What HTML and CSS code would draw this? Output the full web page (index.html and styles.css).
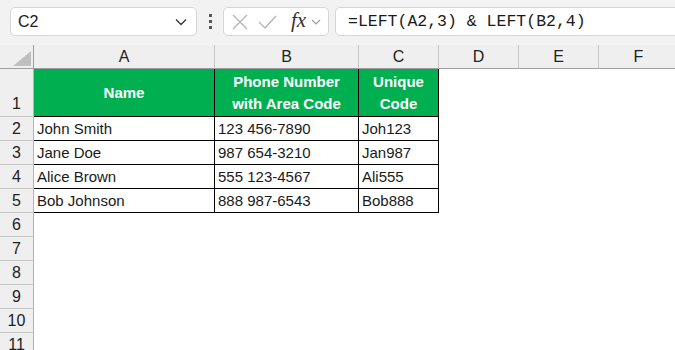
FILE: index.html
```html
<!DOCTYPE html>
<html lang="en">
<head>
  <meta charset="UTF-8">
  <meta name="viewport" content="width=device-width, initial-scale=1.0">
  <title>LEFT formula - Unique Code</title>
  <link rel="stylesheet" href="styles.css">
</head>
<body>
  <div class="toolbar">
    <div class="namebox">
      <span>C2</span>
      <svg class="chev" width="12" height="8" viewBox="0 0 12 8"><path d="M1 1.5 L6 6.5 L11 1.5" fill="none" stroke="#333" stroke-width="1.3"/></svg>
    </div>
    <div class="grip"><i></i><i></i><i></i></div>
    <div class="fxbox">
      <svg width="16" height="16" viewBox="0 0 16 16"><path d="M1 1 L15 15 M15 1 L1 15" stroke="#b3b3b3" stroke-width="1.3"/></svg>
      <svg class="check" width="19" height="14" viewBox="0 0 19 14"><path d="M1 7 L7 13 L18 1" fill="none" stroke="#b3b3b3" stroke-width="1.3"/></svg>
      <span class="fx">fx</span>
      <svg width="10" height="6" viewBox="0 0 10 6"><path d="M1 1 L5 5 L9 1" fill="none" stroke="#9a9a9a" stroke-width="1.1"/></svg>
    </div>
    <div class="formula">=LEFT(A2,3) &amp; LEFT(B2,4)</div>
  </div>

  <div class="sheet">
    <div class="corner">
      <svg width="18" height="15" viewBox="0 0 18 15"><path d="M18 0 L18 15 L0 15 Z" fill="#bfbfbf"/></svg>
    </div>
    <div class="colhead">A</div>
    <div class="colhead">B</div>
    <div class="colhead">C</div>
    <div class="colhead">D</div>
    <div class="colhead">E</div>
    <div class="colhead">F</div>

    <div class="rowhead tall">1</div>
    <div class="cell head">Name</div>
    <div class="cell head">Phone Number<br>with Area Code</div>
    <div class="cell head">Unique<br>Code</div>
    <div class="blank"></div>

    <div class="rowhead">2</div>
    <div class="cell">John Smith</div>
    <div class="cell">123 456-7890</div>
    <div class="cell">Joh123</div>
    <div class="blank"></div>

    <div class="rowhead">3</div>
    <div class="cell">Jane Doe</div>
    <div class="cell">987 654-3210</div>
    <div class="cell">Jan987</div>
    <div class="blank"></div>

    <div class="rowhead">4</div>
    <div class="cell">Alice Brown</div>
    <div class="cell">555 123-4567</div>
    <div class="cell">Ali555</div>
    <div class="blank"></div>

    <div class="rowhead">5</div>
    <div class="cell">Bob Johnson</div>
    <div class="cell">888 987-6543</div>
    <div class="cell">Bob888</div>
    <div class="blank"></div>

    <div class="rowhead">6</div><div class="empty"></div>
    <div class="rowhead">7</div><div class="empty"></div>
    <div class="rowhead">8</div><div class="empty"></div>
    <div class="rowhead">9</div><div class="empty"></div>
    <div class="rowhead">10</div><div class="empty"></div>
    <div class="rowhead">11</div><div class="empty"></div>
  </div>
</body>
</html>
```

FILE: styles.css
```css
body {
  margin: 0;
  width: 675px;
  height: 350px;
  overflow: hidden;
  background: #fff;
  font-family: "Liberation Sans", Arial, sans-serif;
  color: #1a1a1a;
}

/* Top bar: name box + formula bar */
.toolbar {
  height: 45px;
  box-sizing: border-box;
  padding-top: 7px;
  padding-left: 10px;
  display: flex;
  align-items: flex-start;
  background: #f2f2f2;
}

.namebox {
  width: 187px;
  height: 29px;
  box-sizing: border-box;
  background: #fff;
  border: 1px solid #d6d6d6;
  border-radius: 5px;
  display: flex;
  align-items: center;
  justify-content: space-between;
  padding: 0 9px 0 7px;
  font-size: 16px;
}

.grip {
  width: 26px;
  height: 29px;
  display: flex;
  flex-direction: column;
  align-items: center;
  justify-content: center;
  gap: 3px;
}

.grip i {
  width: 3px;
  height: 3px;
  background: #555;
}

.fxbox {
  width: 106px;
  height: 29px;
  box-sizing: border-box;
  background: #fff;
  border: 1px solid #d6d6d6;
  border-radius: 5px;
  display: flex;
  align-items: center;
  padding-left: 8px;
}

.fxbox .check {
  margin-left: 10px;
}

.fx {
  margin-left: 14px;
  margin-right: 5px;
  font-family: "Liberation Serif", "Times New Roman", serif;
  font-style: italic;
  font-size: 21px;
  color: #333;
  line-height: 1;
  margin-top: -2px;
}

.formula {
  flex: 1;
  height: 29px;
  margin-left: 6px;
  margin-right: -10px;
  box-sizing: border-box;
  background: #fff;
  border: 1px solid #d6d6d6;
  border-radius: 5px;
  padding-left: 12px;
  line-height: 27px;
  font-family: "Liberation Mono", "Courier New", monospace;
  font-size: 16.5px;
  color: #1a1a1a;
  white-space: nowrap;
}

/* Sheet grid */
.sheet {
  display: grid;
  grid-template-columns: 34px 181px 144px 80px 80px 80px 80px;
  grid-template-rows: 24px 48px repeat(10, 24px);
}

.sheet > div {
  box-sizing: border-box;
}

.corner {
  background: #efefef;
  border-right: 1px solid #9e9e9e;
  border-bottom: 1px solid #9e9e9e;
  display: flex;
  align-items: flex-end;
  justify-content: flex-end;
  padding: 0 2px 2px 0;
}

.colhead {
  background: #efefef;
  border-right: 1px solid #c6c6c6;
  border-bottom: 1px solid #9e9e9e;
  text-align: center;
  font-size: 16px;
  line-height: 24px;
  color: #222;
}

.rowhead {
  background: #efefef;
  border-right: 1px solid #b4b4b4;
  border-bottom: 1px solid #c6c6c6;
  text-align: center;
  font-size: 16px;
  line-height: 23px;
  color: #222;
}

.rowhead.tall {
  display: flex;
  align-items: flex-end;
  justify-content: center;
  padding-bottom: 1px;
}

.cell {
  border-right: 1px solid #000;
  border-bottom: 1px solid #000;
  padding-left: 3px;
  font-size: 15px;
  line-height: 23px;
  white-space: nowrap;
  overflow: hidden;
}

.cell.head {
  background: #00b050;
  color: #fff;
  font-weight: bold;
  text-align: center;
  padding-left: 0;
  line-height: 22px;
  display: flex;
  align-items: center;
  justify-content: center;
}

.blank {
  grid-column: span 3;
}

.empty {
  grid-column: 2 / -1;
}
```
